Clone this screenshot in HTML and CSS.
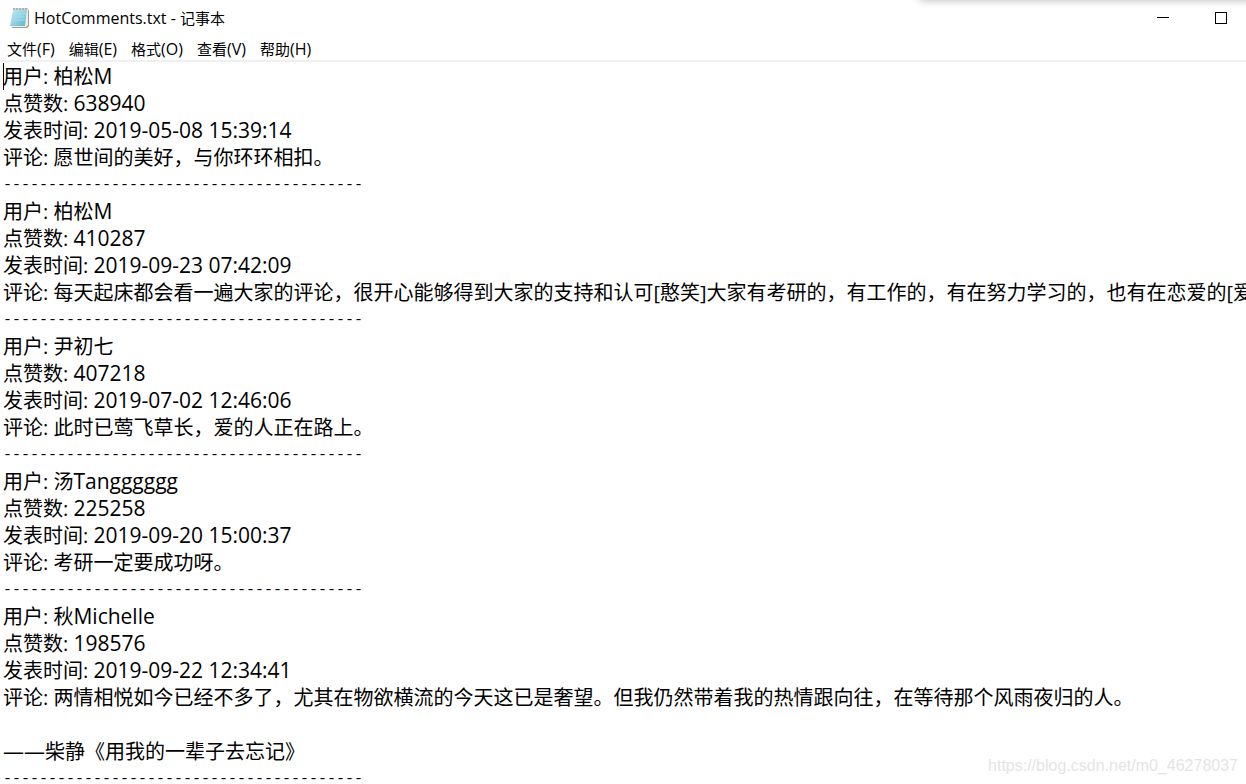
FILE: index.html
```html
<!DOCTYPE html>
<html lang="zh-CN">

<head>
  <meta charset="UTF-8">
  <title>HotComments.txt - 记事本</title>
  <link rel="stylesheet" href="styles.css">
</head>

<body>
  <div class="window">
    <header class="titlebar">
      <svg class="app-icon" width="22" height="22" viewBox="0 0 22 22">
        <defs>
          <linearGradient id="pad" x1="0" y1="0" x2="1" y2="1">
            <stop offset="0" stop-color="#c4e9f2" />
            <stop offset="0.5" stop-color="#91d3e5" />
            <stop offset="1" stop-color="#58b4cf" />
          </linearGradient>
        </defs>
        <path d="M6 3H21V19L19 21H4Z" fill="#a69b84" />
        <path d="M5 2H20V18L18 20H3Z" fill="#f1eee3" />
        <path d="M5 3H19L17 19H2Z" fill="url(#pad)" />
        <path d="M5 7H18M5 10H17M4 13H17" stroke="#a9dbe8" fill="none" />
        <path d="M5 2H20" stroke="#d9d9d9" stroke-width="2" />
        <path d="M6 1V3M9 1V3M12 1V3M15 1V3M18 1V3" stroke="#888" fill="none" />
      </svg>
      <h1><span class="latin">HotComments.txt - </span>记事本</h1>
      <div class="controls">
        <button type="button" aria-label="最小化">
          <svg width="12" height="12" viewBox="0 0 12 12"><path d="M0 5.5H12" stroke="#000" /></svg>
        </button>
        <button type="button" aria-label="最大化">
          <svg width="12" height="12" viewBox="0 0 12 12"><rect x="0.5" y="0.5" width="11" height="11" fill="none" stroke="#000" /></svg>
        </button>
      </div>
    </header>

    <nav class="menubar">
      <button type="button">文件<span class="latin">(F)</span></button>
      <button type="button">编辑<span class="latin">(E)</span></button>
      <button type="button">格式<span class="latin">(O)</span></button>
      <button type="button">查看<span class="latin">(V)</span></button>
      <button type="button">帮助<span class="latin">(H)</span></button>
    </nav>

    <main class="editor" role="textbox" aria-multiline="true" aria-label="文本编辑器" contenteditable="true" spellcheck="false">
      <p class="caret">用户: 柏松<span class="latin">M</span></p>
      <p>点赞数: <span class="latin">638940</span></p>
      <p>发表时间: <span class="latin">2019-05-08 15:39:14</span></p>
      <p>评论: 愿世间的美好，与你环环相扣。</p>
      <p class="divider">----------------------------------------</p>
      <p>用户: 柏松<span class="latin">M</span></p>
      <p>点赞数: <span class="latin">410287</span></p>
      <p>发表时间: <span class="latin">2019-09-23 07:42:09</span></p>
      <p>评论: 每天起床都会看一遍大家的评论，很开心能够得到大家的支持和认可[憨笑]大家有考研的，有工作的，有在努力学习的，也有在恋爱的[爱</p>
      <p class="divider">----------------------------------------</p>
      <p>用户: 尹初七</p>
      <p>点赞数: <span class="latin">407218</span></p>
      <p>发表时间: <span class="latin">2019-07-02 12:46:06</span></p>
      <p>评论: 此时已莺飞草长，爱的人正在路上。</p>
      <p class="divider">----------------------------------------</p>
      <p>用户: 汤<span class="latin">Tangggggg</span></p>
      <p>点赞数: <span class="latin">225258</span></p>
      <p>发表时间: <span class="latin">2019-09-20 15:00:37</span></p>
      <p>评论: 考研一定要成功呀。</p>
      <p class="divider">----------------------------------------</p>
      <p>用户: 秋<span class="latin">Michelle</span></p>
      <p>点赞数: <span class="latin">198576</span></p>
      <p>发表时间: <span class="latin">2019-09-22 12:34:41</span></p>
      <p>评论: 两情相悦如今已经不多了，尤其在物欲横流的今天这已是奢望。但我仍然带着我的热情跟向往，在等待那个风雨夜归的人。</p>
      <p><br></p>
      <p><span class="latin">——</span>柴静《用我的一辈子去忘记》</p>
      <p class="divider">----------------------------------------</p>
    </main>
  </div>

  <div class="top-shadow"></div>
  <div class="watermark">https://blog.csdn.net/m0_46278037</div>
</body>

</html>
```
FILE: styles.css
```css
* {
  box-sizing: border-box;
}

body {
  margin: 0;
  height: 100vh;
  overflow: hidden;
  position: relative;
  background-color: #fff;
  color: #000;
  font-family: "Open Sans", "Noto Sans CJK SC", sans-serif;
}

button {
  border: none;
  padding: 0;
  background: none;
  color: inherit;
  font: inherit;
}

.window {
  display: flex;
  flex-direction: column;
  height: 100%;
  overflow: hidden;
}

.titlebar {
  flex: none;
  display: flex;
  align-items: center;
  height: 36px;
  padding-left: 8px;
}

.app-icon {
  margin-right: 4px;
}

.titlebar h1 {
  margin: 0;
  font-size: 15px;
  font-weight: normal;
  line-height: 20px;
}

.titlebar .latin,
.menubar .latin {
  font-size: 16px;
}

.controls {
  display: flex;
  margin-left: auto;
  margin-right: -4px;
}

.controls button {
  display: flex;
  align-items: center;
  justify-content: center;
  width: 58px;
  height: 36px;
}

.menubar {
  flex: none;
  display: flex;
  gap: 14px;
  height: 26px;
  padding: 0 7px;
  border-bottom: 2px solid #f0f0f0;
  font-size: 15px;
  line-height: 26px;
}

.editor {
  flex: 1;
  min-height: 0;
  overflow: hidden;
  padding: 1px 0 0 3px;
  font-size: 20px;
  line-height: 27px;
  outline: none;
}

.editor p {
  margin: 0;
  height: 27px;
  white-space: pre;
}

.editor .latin {
  font-size: 21px;
}

.editor .divider {
  font-family: "Liberation Mono", monospace;
  font-size: 15px;
  line-height: 29px;
}

/* text cursor at the start of the file */
.caret::before {
  content: "";
  position: absolute;
  left: 3px;
  width: 1px;
  height: 27px;
  background-color: #000;
}

/* shadow of the window lying above */
.top-shadow {
  position: absolute;
  top: -10px;
  right: -10px;
  width: 336px;
  height: 10px;
  box-shadow: 0 0 8px rgba(0, 0, 0, 0.3);
}

.watermark {
  position: absolute;
  right: 8px;
  bottom: 8px;
  color: #e4e4e4;
  font-family: "Liberation Sans", Arial, sans-serif;
  font-size: 16px;
  line-height: 20px;
}
```
